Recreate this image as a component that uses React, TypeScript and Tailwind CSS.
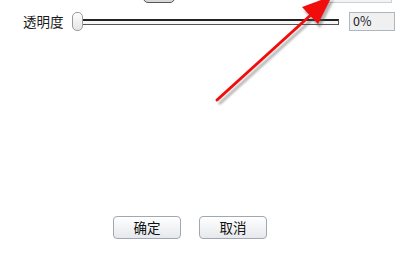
import React from "react";

const font = { fontFamily: '"Noto Sans CJK SC", "Liberation Sans", sans-serif' };

function Arrow() {
  // red annotation arrow drawn over the dialog
  return (
    <svg
      className="pointer-events-none absolute left-0 top-0"
      width={408}
      height={267}
      viewBox="0 0 408 267"
    >
      <defs>
        <filter id="sh" x="-20%" y="-20%" width="140%" height="140%">
          <feGaussianBlur stdDeviation="1.2" />
        </filter>
      </defs>
      <g transform="translate(2,3)" opacity="0.45" filter="url(#sh)">
        <line x1="217" y1="101" x2="314" y2="13" stroke="#555" strokeWidth="3" />
        <polygon points="332,-3 302,8 318,25" fill="#555" />
      </g>
      <line x1="217" y1="100" x2="313" y2="13" stroke="#f20d0d" strokeWidth="3" strokeLinecap="round" />
      <polygon points="332,-4 302,7 318,24" fill="#f20d0d" />
    </svg>
  );
}

export default function App() {
  return (
    <div className="relative h-[267px] w-[408px] overflow-hidden bg-white" style={font}>
      <div className="flex h-[3px] items-end overflow-hidden">
        <div className="ml-[143px] h-[20px] w-[32px] shrink-0 rounded-b-[5px] border border-[#555] bg-[#d8d8d8]" />
        <div className="ml-[152px] h-[20px] w-[65px] shrink-0 border border-[#c8d0d8] bg-[#f4f4f4]" />
      </div>

      <div className="mt-[9px] flex h-[19px] items-center">
        <span className="ml-[23px] w-[42px] text-[13.5px] leading-none text-[#1a1a1a]">透明度</span>
        <div className="ml-[7px] flex items-center">
          <div className="z-10 h-[19px] w-[11px] shrink-0 rounded-[5px] border border-[#9a9a9a] bg-gradient-to-b from-white to-[#e4e4e4]" />
          <div className="-ml-[1px] h-[6px] w-[257px] border border-[#555] border-t-2 border-t-[#222] bg-[#f6f6f6]" />
        </div>
        <div className="ml-[10px] flex h-[19px] w-[46px] items-center border border-[#a9b6c4] bg-[#f0f0f0] pl-[3px] text-[12.5px] leading-none text-[#1b1b2a]">
          0%
        </div>
      </div>

      <div className="mt-[185px] flex">
        <button className="ml-[113px] h-[23px] w-[68px] rounded-[4px] border border-[#9fa9b5] bg-gradient-to-b from-white to-[#e6e8ec] text-[13.5px] leading-none text-[#111]">
          确定
        </button>
        <button className="ml-[18px] h-[23px] w-[68px] rounded-[4px] border border-[#9fa9b5] bg-gradient-to-b from-white to-[#e6e8ec] text-[13.5px] leading-none text-[#111]">
          取消
        </button>
      </div>

      <Arrow />
    </div>
  );
}
